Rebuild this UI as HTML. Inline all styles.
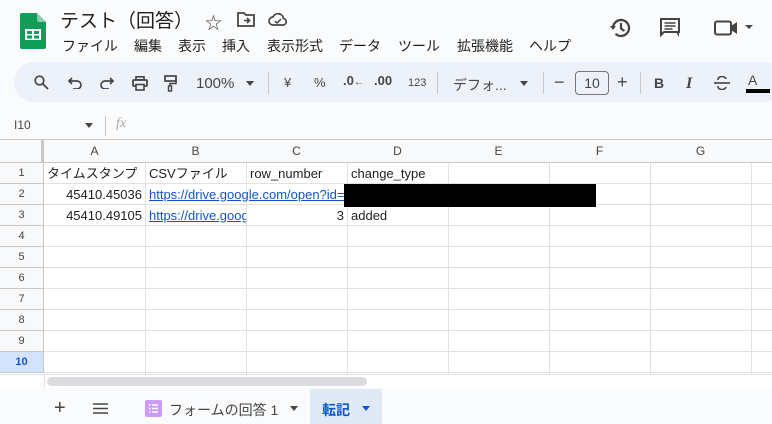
<!DOCTYPE html>
<html><head><meta charset="utf-8"><style>
*{box-sizing:border-box;margin:0;padding:0}
body{width:772px;height:424px;overflow:hidden;background:#f9fbfd;font-family:"Liberation Sans","Noto Sans CJK JP",sans-serif;color:#1f1f1f;position:relative}
.a{position:absolute}
.m{position:absolute;top:36px;font-size:14px}
.tb{color:#444746;font-size:14px}
.grid{position:absolute;left:0;top:139px;width:772px;height:235px;background:#fff}
.ch{position:absolute;top:0;height:24px;border-right:1px solid #c7c7c7;border-bottom:1px solid #c7c7c7;border-top:1px solid #c7c7c7;background:#f8f9fa;font-size:12px;color:#444;text-align:center;line-height:22px}
.rh{position:absolute;left:0;width:44px;height:21px;border-right:1px solid #c7c7c7;border-bottom:1px solid #c7c7c7;background:#f8f9fa;font-size:11px;color:#444;text-align:center;line-height:21px}
.vl{position:absolute;top:24px;width:1px;height:211px;background:#e1e1e1}
.hl{position:absolute;left:44px;height:1px;width:728px;background:#e1e1e1}
.c{position:absolute;font-size:13px;line-height:22px;white-space:nowrap;overflow:hidden}
</style></head><body>
<svg class="a" style="left:20px;top:13px" width="26" height="36" viewBox="0 0 26 36"><path d="M2 0h15l9 9v25a2 2 0 0 1-2 2H2a2 2 0 0 1-2-2V2a2 2 0 0 1 2-2z" fill="#0f9d58"/><path d="M17 0l9 9h-7a2 2 0 0 1-2-2z" fill="#87ceac"/><rect x="5" y="16" width="16" height="11" fill="#fff"/><rect x="7" y="18" width="5" height="3" fill="#0f9d58"/><rect x="14" y="18" width="5" height="3" fill="#0f9d58"/><rect x="7" y="22.5" width="5" height="3" fill="#0f9d58"/><rect x="14" y="22.5" width="5" height="3" fill="#0f9d58"/></svg>
<div class="a" style="left:60px;top:6px;font-size:19px">テスト（回答）</div>
<div class="a" style="left:205px;top:9px;font-size:17px;color:#444">☆</div>
<svg class="a" style="left:237px;top:12px" width="18" height="15" viewBox="0 0 18 15"><path d="M1 1h6l2 2h8v11H1z" fill="none" stroke="#444" stroke-width="1.8"/><path d="M7 8.5h5M10 6l2.5 2.5L10 11" fill="none" stroke="#444" stroke-width="1.6"/></svg>
<svg class="a" style="left:268px;top:12px" width="20" height="14" viewBox="0 0 20 14"><path d="M5 13a4 4 0 0 1 0-8 5.5 5.5 0 0 1 10.5 1.5A3.3 3.3 0 0 1 15.5 13z" fill="none" stroke="#444" stroke-width="1.7"/><path d="M7 9l2 2 4-4" fill="none" stroke="#444" stroke-width="1.5"/></svg>
<div class="m" style="left:62px">ファイル</div><div class="m" style="left:134px">編集</div><div class="m" style="left:178px">表示</div><div class="m" style="left:222px">挿入</div><div class="m" style="left:267px">表示形式</div><div class="m" style="left:339px">データ</div><div class="m" style="left:398px">ツール</div><div class="m" style="left:457px">拡張機能</div><div class="m" style="left:529px">ヘルプ</div>
<svg class="a" style="left:609px;top:16px" width="24" height="24" viewBox="0 0 24 24"><path d="M4 12a8 8 0 1 1 2.5 5.8" fill="none" stroke="#444" stroke-width="2.3"/><path d="M1 10l3 4 3-4z" fill="#444"/><path d="M12 7v5.5l3.5 2.5" fill="none" stroke="#444" stroke-width="2.2"/></svg>
<svg class="a" style="left:660px;top:18px" width="20" height="20" viewBox="0 0 20 20"><path d="M1 1h18v13H4l-3 3z" fill="none" stroke="#444" stroke-width="2"/><path d="M4.5 5h11M4.5 8h11M4.5 11h8" stroke="#444" stroke-width="1.6"/><path d="M16 14l3 5v-5z" fill="#444"/></svg>
<svg class="a" style="left:714px;top:20px" width="40" height="16" viewBox="0 0 40 16"><rect x="1" y="1.5" width="16" height="13" rx="2" fill="none" stroke="#444" stroke-width="2"/><path d="M17 6l6-4v12l-6-4z" fill="#444"/><path d="M31 5h8l-4 4z" fill="#444"/></svg>
<div class="a" style="left:14px;top:62px;width:770px;height:40px;background:#edf2fa;border-radius:20px"></div>
<svg class="a" style="left:34px;top:75px" width="15" height="15" viewBox="0 0 15 15"><circle cx="5.5" cy="5.5" r="4.3" fill="none" stroke="#444" stroke-width="1.7"/><path d="M8.7 8.7L14 14" stroke="#444" stroke-width="1.8"/></svg>
<svg class="a" style="left:68px;top:77px" width="14" height="12" viewBox="0 0 14 12"><path d="M4 1L1 4l3 3M1 4h8a4 4 0 0 1 0 8H5" fill="none" stroke="#444" stroke-width="1.7"/></svg>
<svg class="a" style="left:100px;top:77px" width="14" height="12" viewBox="0 0 14 12"><path d="M10 1l3 3-3 3M13 4H5a4 4 0 0 0 0 8h4" fill="none" stroke="#444" stroke-width="1.7"/></svg>
<svg class="a" style="left:132px;top:76px" width="16" height="15" viewBox="0 0 16 15"><rect x="4" y="0.8" width="8" height="3" fill="none" stroke="#444" stroke-width="1.6"/><rect x="1" y="4" width="14" height="6" rx="1" fill="none" stroke="#444" stroke-width="1.8"/><rect x="4" y="8.5" width="8" height="5.5" fill="#edf2fa" stroke="#444" stroke-width="1.6"/></svg>
<svg class="a" style="left:164px;top:75px" width="13" height="17" viewBox="0 0 13 17"><rect x="1" y="1" width="11" height="5" fill="none" stroke="#444" stroke-width="1.7"/><path d="M12 3.5v5H6v3" fill="none" stroke="#444" stroke-width="1.5"/><rect x="4.5" y="11" width="3" height="5" fill="none" stroke="#444" stroke-width="1.4"/></svg>
<div class="a tb" style="left:196px;top:75px;font-size:15px">100%</div>
<div class="a" style="left:246px;top:81px;border:4px solid transparent;border-top:5px solid #444"></div>
<div class="a" style="left:268px;top:72px;width:1px;height:22px;background:#c7c7c7"></div>
<div class="a tb" style="left:284px;top:75px;font-size:13px">¥</div>
<div class="a tb" style="left:314px;top:75px;font-size:13px">%</div>
<div class="a tb" style="left:343px;top:73px;font-size:13px;font-weight:bold">.0<span style="font-size:10px;font-weight:normal">←</span></div>
<div class="a tb" style="left:374px;top:73px;font-size:13px;font-weight:bold">.00</div>
<div class="a tb" style="left:408px;top:77px;font-size:11px">123</div>
<div class="a" style="left:437px;top:72px;width:1px;height:22px;background:#c7c7c7"></div>
<div class="a tb" style="left:453px;top:75px">デフォ...</div>
<div class="a" style="left:520px;top:81px;border:4px solid transparent;border-top:5px solid #444"></div>
<div class="a" style="left:543px;top:72px;width:1px;height:22px;background:#c7c7c7"></div>
<div class="a tb" style="left:554px;top:72px;font-size:18px">−</div>
<div class="a" style="left:575px;top:71px;width:34px;height:24px;border:1px solid #747775;border-radius:4px;font-size:14px;text-align:center;line-height:22px;color:#444">10</div>
<div class="a tb" style="left:617px;top:72px;font-size:18px">+</div>
<div class="a" style="left:640px;top:72px;width:1px;height:22px;background:#c7c7c7"></div>
<div class="a tb" style="left:654px;top:75px;font-weight:bold">B</div>
<div class="a tb" style="left:686px;top:75px;font-style:italic;font-family:'Liberation Serif',serif;font-size:16px;font-weight:bold">I</div>
<svg class="a" style="left:714px;top:76px" width="16" height="14" viewBox="0 0 16 14"><path d="M0 7h16" stroke="#444" stroke-width="1.6"/><path d="M4 4a4 3 0 0 1 8-1M4 10a4 3 0 0 0 8 1" fill="none" stroke="#444" stroke-width="1.6"/></svg>
<div class="a tb" style="left:748px;top:72px">A</div>
<div class="a" style="left:746px;top:89px;width:24px;height:4px;background:#000"></div>
<div class="a" style="left:14px;top:118px;font-size:12px;color:#444">I10</div>
<div class="a" style="left:85px;top:123px;border:4px solid transparent;border-top:5px solid #444"></div>
<div class="a" style="left:105px;top:116px;width:1px;height:20px;background:#c7c7c7"></div>
<div class="a" style="left:116px;top:116px;font-size:14px;font-style:italic;color:#aaa;font-family:'Liberation Serif',serif">fx</div>
<div class="grid">
<div class="ch" style="left:0;width:45px;border-right:4px solid #c7c7c7"></div>
<div class="ch" style="left:44px;width:102px">A</div>
<div class="ch" style="left:145px;width:102px">B</div>
<div class="ch" style="left:246px;width:102px">C</div>
<div class="ch" style="left:347px;width:102px">D</div>
<div class="ch" style="left:448px;width:102px">E</div>
<div class="ch" style="left:549px;width:102px">F</div>
<div class="ch" style="left:650px;width:102px">G</div>
<div class="ch" style="left:751px;width:30px"></div>
<div class="vl" style="left:145px"></div><div class="vl" style="left:246px"></div><div class="vl" style="left:347px"></div><div class="vl" style="left:448px"></div><div class="vl" style="left:549px"></div><div class="vl" style="left:650px"></div><div class="vl" style="left:751px"></div>
<div class="hl" style="top:44px"></div><div class="hl" style="top:65px"></div><div class="hl" style="top:86px"></div><div class="hl" style="top:107px"></div><div class="hl" style="top:128px"></div><div class="hl" style="top:149px"></div><div class="hl" style="top:170px"></div><div class="hl" style="top:191px"></div><div class="hl" style="top:212px"></div><div class="hl" style="top:233px"></div>
<div class="rh" style="top:24px">1</div><div class="rh" style="top:45px">2</div><div class="rh" style="top:66px">3</div><div class="rh" style="top:87px">4</div><div class="rh" style="top:108px">5</div><div class="rh" style="top:129px">6</div><div class="rh" style="top:150px">7</div><div class="rh" style="top:171px">8</div><div class="rh" style="top:192px">9</div><div class="rh" style="top:213px;background:#d3e3fd;font-weight:bold;color:#0b57d0">10</div>
<div class="c" style="left:47px;top:24px">タイムスタンプ</div>
<div class="c" style="left:149px;top:24px">CSVファイル</div>
<div class="c" style="left:250px;top:24px">row_number</div>
<div class="c" style="left:351px;top:24px">change_type</div>
<div class="c" style="left:44px;width:98px;top:45px;text-align:right">45410.45036</div>
<div class="c" style="left:149px;top:45px;color:#1155cc;text-decoration:underline;width:200px">https://drive.google.com/open?id=</div>
<div class="c" style="left:44px;width:98px;top:66px;text-align:right">45410.49105</div>
<div class="c" style="left:149px;top:66px;color:#1155cc;text-decoration:underline;width:97px">https://drive.google.com</div>
<div class="c" style="left:246px;width:98px;top:66px;text-align:right">3</div>
<div class="c" style="left:351px;top:66px">added</div>
<div class="a" style="left:344px;top:45px;width:252px;height:23px;background:#000"></div>
</div>
<div class="a" style="left:0;top:374px;width:772px;height:14px;background:#fff;border-top:1px solid #e1e1e1"></div>
<div class="a" style="left:44px;top:374px;width:1px;height:14px;background:#e1e1e1"></div>
<div class="a" style="left:47px;top:377px;width:320px;height:9px;background:#dadce0;border-radius:5px"></div>
<div class="a" style="left:54px;top:397px;font-size:20px;color:#444">+</div>
<svg class="a" style="left:93px;top:403px" width="15" height="11" viewBox="0 0 15 11"><path d="M0 1h15M0 5.5h15M0 10h15" stroke="#444" stroke-width="1.6"/></svg>
<svg class="a" style="left:145px;top:400px" width="17" height="17" viewBox="0 0 17 17"><rect width="17" height="17" rx="2" fill="#c58af9" opacity=".85"/><path d="M4 5h1.5M7 5h6M4 8.5h1.5M7 8.5h6M4 12h1.5M7 12h6" stroke="#fff" stroke-width="1.5"/></svg>
<div class="a" style="left:169px;top:400px;font-size:14px;color:#444">フォームの回答 1</div>
<div class="a" style="left:290px;top:406px;border:4px solid transparent;border-top:5px solid #444"></div>
<div class="a" style="left:310px;top:389px;width:72px;height:35px;background:#e1e9f7"></div>
<div class="a" style="left:322px;top:400px;font-size:14px;color:#0b57d0;font-weight:bold">転記</div>
<div class="a" style="left:362px;top:406px;border:4px solid transparent;border-top:5px solid #0b57d0"></div>
</body></html>
